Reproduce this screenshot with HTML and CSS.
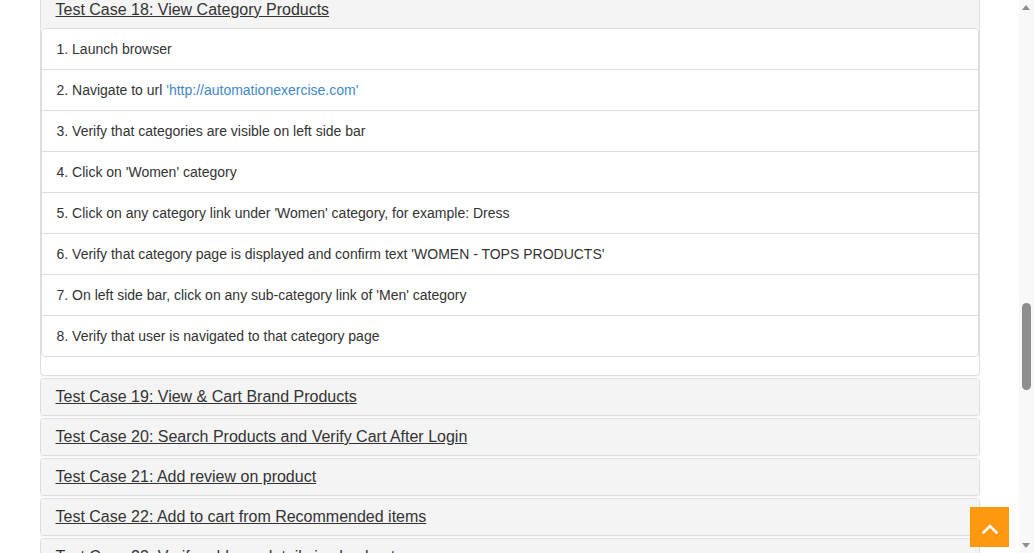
FILE: index.html
```html
<!DOCTYPE html>
<html lang="en">
<head>
<meta charset="utf-8">
<title>Test Cases</title>
<link rel="stylesheet" href="styles.css">
</head>
<body>
<div class="page">
  <div class="container">
    <div class="panel-group">
      <div class="panel panel-open">
        <div class="panel-heading"><a class="panel-title" href="#">Test Case 18: View Category Products</a></div>
        <ul class="list-group">
          <li class="list-group-item">1. Launch browser</li>
          <li class="list-group-item">2. Navigate to url <a class="link" href="#">'http://automationexercise.com'</a></li>
          <li class="list-group-item">3. Verify that categories are visible on left side bar</li>
          <li class="list-group-item">4. Click on 'Women' category</li>
          <li class="list-group-item">5. Click on any category link under 'Women' category, for example: Dress</li>
          <li class="list-group-item">6. Verify that category page is displayed and confirm text 'WOMEN - TOPS PRODUCTS'</li>
          <li class="list-group-item">7. On left side bar, click on any sub-category link of 'Men' category</li>
          <li class="list-group-item">8. Verify that user is navigated to that category page</li>
        </ul>
      </div>
      <div class="panel"><div class="panel-heading"><a class="panel-title" href="#">Test Case 19: View &amp; Cart Brand Products</a></div></div>
      <div class="panel"><div class="panel-heading"><a class="panel-title" href="#">Test Case 20: Search Products and Verify Cart After Login</a></div></div>
      <div class="panel"><div class="panel-heading"><a class="panel-title" href="#">Test Case 21: Add review on product</a></div></div>
      <div class="panel"><div class="panel-heading"><a class="panel-title" href="#">Test Case 22: Add to cart from Recommended items</a></div></div>
      <div class="panel"><div class="panel-heading"><a class="panel-title" href="#">Test Case 23: Verify address details in checkout page</a></div></div>
      <div class="panel"><div class="panel-heading"><a class="panel-title" href="#">Test Case 24: Download Invoice after purchase order</a></div></div>
    </div>
  </div>
</div>

<a class="scroll-up" href="#" aria-label="Scroll to top">
  <svg width="16" height="10" viewBox="0 0 16 10"><polyline points="1.5,8.5 8,2 14.5,8.5" fill="none" stroke="#fff" stroke-width="2.6" stroke-linecap="square"/></svg>
</a>

<div class="scrollbar" aria-hidden="true">
  <span class="sb-arrow sb-up"></span>
  <span class="sb-thumb"></span>
  <span class="sb-arrow sb-down"></span>
</div>
</body>
</html>
```

FILE: styles.css
```css
html, body {
  margin: 0;
  padding: 0;
  height: 100%;
  overflow: hidden;
  background: #fff;
}

body {
  font-family: "Liberation Sans", Arial, Helvetica, sans-serif;
  font-size: 14px;
  line-height: 20px;
  color: #333;
}

.page {
  margin-right: 15px;
}

.container {
  width: 940px;
  margin: 0 auto;
}

.panel-group {
  margin-top: -9px;
}

.panel {
  border: 1px solid #ddd;
  border-radius: 4px;
  background: #fff;
  box-shadow: 0 1px 1px rgba(0, 0, 0, 0.05);
  margin-bottom: 2px;
}

.panel-heading {
  background: #f4f4f4;
  padding: 10px 15px;
  font-size: 16px;
  line-height: 16px;
  height: 16px;
  border-radius: 3px;
}

.panel-open .panel-heading {
  border-radius: 3px 3px 0 0;
}

.panel-title {
  font-size: 16px;
  color: #333;
  text-decoration: underline;
}

.list-group {
  list-style: none;
  margin: 0 0 18px;
  padding: 0;
}

.list-group-item {
  padding: 10px 15px;
  border: 1px solid #ddd;
  margin-bottom: -1px;
  background: #fff;
}

.list-group-item:first-child {
  border-radius: 4px 4px 0 0;
}

.list-group-item:last-child {
  border-radius: 0 0 4px 4px;
  margin-bottom: 0;
}

.link {
  color: #3f89c9;
  text-decoration: none;
}

.scroll-up {
  position: fixed;
  right: 25px;
  bottom: 6px;
  width: 39px;
  height: 40px;
  background: #fe980f;
  display: flex;
  align-items: center;
  justify-content: center;
  padding-top: 4px;
  box-sizing: border-box;
}

.scrollbar {
  position: fixed;
  top: 0;
  right: 0;
  width: 15px;
  height: 100%;
  background: #f8f8f8;
}

.sb-arrow {
  position: absolute;
  left: 3px;
  width: 0;
  height: 0;
  border-left: 4.5px solid transparent;
  border-right: 4.5px solid transparent;
}

.sb-up {
  top: 5px;
  border-bottom: 5px solid #8e8e8e;
}

.sb-down {
  bottom: 5px;
  border-top: 5px solid #8e8e8e;
}

.sb-thumb {
  position: absolute;
  left: 3px;
  top: 303px;
  width: 9px;
  height: 87px;
  border-radius: 5px;
  background: #8e8e8e;
}
```
